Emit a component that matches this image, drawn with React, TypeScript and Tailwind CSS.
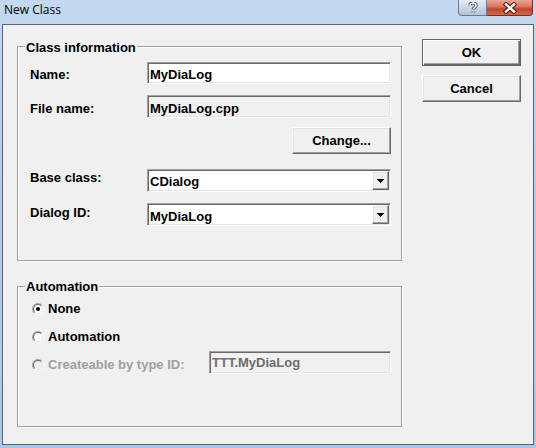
import React from 'react'

// classic 3D edges
const sunken =
  'border border-t-[#a0a0a0] border-l-[#a0a0a0] border-b-white border-r-white shadow-[inset_1px_1px_0_#696969,inset_-1px_-1px_0_#e3e3e3]'
const raised =
  'border border-t-white border-l-white border-b-[#696969] border-r-[#696969] shadow-[inset_-1px_-1px_0_#a0a0a0,inset_1px_1px_0_#e3e3e3] bg-[#f0f0f0]'

interface GroupBoxProps {
  title: string
  titleClass: string
  className: string
  children: React.ReactNode
}

const GroupBox: React.FC<GroupBoxProps> = ({ title, titleClass, className, children }) => (
  <div
    className={`relative border border-[#a0a0a0] shadow-[1px_1px_0_#fff,inset_1px_1px_0_#fff] ${className}`}
  >
    <span className={`absolute px-[1px] bg-[#f0f0f0] leading-[15px] ${titleClass}`}>{title}</span>
    {children}
  </div>
)

const DropArrow = () => (
  <svg width="7" height="4" viewBox="0 0 7 4" shapeRendering="crispEdges">
    <path d="M0 0h7v1H0zM1 1h5v1H1zM2 2h3v1H2zM3 3h1v1H3z" fill="#000" />
  </svg>
)

const Combo: React.FC<{ value: string; textPt: string }> = ({ value, textPt }) => (
  <div className={`w-[244px] h-[23px] bg-white flex items-start ${sunken}`}>
    <span className={`flex-1 pl-[2px] ${textPt}`}>{value}</span>
    <span className={`w-[17px] h-[19px] mt-[1px] mr-[1px] flex items-center justify-center ${raised}`}>
      <DropArrow />
    </span>
  </div>
)

const Radio: React.FC<{ checked?: boolean; disabled?: boolean }> = ({ checked, disabled }) => (
  <span className="w-[12px] h-[12px] shrink-0 rounded-full border border-t-[#a0a0a0] border-l-[#a0a0a0] border-b-white border-r-white flex items-center justify-center">
    <span
      className={`w-[10px] h-[10px] rounded-full border border-t-[#696969] border-l-[#696969] border-b-[#e3e3e3] border-r-[#e3e3e3] flex items-center justify-center ${
        disabled ? 'bg-[#f0f0f0]' : 'bg-white'
      }`}
    >
      {checked && <span className="w-[4px] h-[4px] rounded-full bg-black" />}
    </span>
  </span>
)

export default function App() {
  return (
    <div className="w-[536px] h-[448px] overflow-hidden flex flex-col bg-[linear-gradient(180deg,#c3d9f0_0%,#b2cdea_40%,#a9c6e6_100%)] font-['Liberation_Sans',Arial,sans-serif]">
      {/* title bar */}
      <div className="h-[24px] flex items-start shrink-0">
        <span className="pl-[4px] pt-[2px] text-[12px] leading-[16px] text-black font-['Open_Sans','Noto_Sans',sans-serif]">
          New Class
        </span>
        <div className="ml-auto mr-[3px] flex">
          <div className="w-[29px] h-[16px] rounded-bl-[4px] border border-t-0 border-[#6f7c8e] bg-[linear-gradient(180deg,#e4ebf4_0%,#ccd8e6_50%,#b3c3d6_100%)] flex items-center justify-center">
            <svg width="10" height="12" viewBox="0 0 10 12">
              <path
                d="M2 3.5C2 1.5 3.5 1 5 1s3 .8 3 2.5c0 2-2.8 2.2-2.8 4M5.2 9.5v1"
                fill="none"
                stroke="#3a4350"
                strokeWidth="3.2"
              />
              <path
                d="M2 3.5C2 1.5 3.5 1 5 1s3 .8 3 2.5c0 2-2.8 2.2-2.8 4M5.2 9.5v1"
                fill="none"
                stroke="#fff"
                strokeWidth="1.6"
              />
            </svg>
          </div>
          <div className="w-[46px] h-[16px] rounded-br-[4px] border border-t-0 border-l-0 border-[#7b2a1e] bg-[linear-gradient(180deg,#eaa696_0%,#d8725e_45%,#c5432a_60%,#d16a52_100%)] flex items-center justify-center">
            <svg width="16" height="12" viewBox="0 0 16 12">
              <path d="M4 2.5l8 7M12 2.5l-8 7" stroke="#4a1a12" strokeWidth="4.4" strokeLinecap="square" />
              <path d="M4 2.5l8 7M12 2.5l-8 7" stroke="#fff" strokeWidth="2.4" strokeLinecap="square" />
            </svg>
          </div>
        </div>
      </div>

      {/* client area */}
      <div className="ml-[2px] w-[532px] h-[421px] border border-[#5d6470] bg-[#f0f0f0] flex text-[13px] leading-[15px] font-bold text-black">
        <div className="pl-[14px] pt-[21px] flex flex-col">
          <GroupBox title="Class information" titleClass="left-[7px] top-[-7px]" className="w-[385px] h-[215px]">
            <div className="pl-[12px] pr-[10px] pt-[15px] flex flex-col">
              <div className="flex items-start">
                <span className="w-[117px] pt-[5px]">Name:</span>
                <div className={`w-[244px] h-[22px] bg-white pl-[2px] pt-[4px] ${sunken}`}>MyDiaLog</div>
              </div>
              <div className="flex items-start mt-[11px]">
                <span className="w-[117px] pt-[6px]">File name:</span>
                <div className={`w-[244px] h-[23px] pl-[2px] pt-[5px] ${sunken}`}>MyDiaLog.cpp</div>
              </div>
              <button
                className={`self-end mt-[9px] w-[99px] h-[27px] flex items-center justify-center ${raised}`}
              >
                Change...
              </button>
              <div className="flex items-start mt-[15px]">
                <span className="w-[117px] pt-[1px]">Base class:</span>
                <Combo value="CDialog" textPt="pt-[4px]" />
              </div>
              <div className="flex items-start mt-[11px]">
                <span className="w-[117px] pt-[2px]">Dialog ID:</span>
                <Combo value="MyDiaLog" textPt="pt-[5px]" />
              </div>
            </div>
          </GroupBox>

          <GroupBox title="Automation" titleClass="left-[7px] top-[-8px]" className="mt-[25px] w-[385px] h-[141px]">
            <div className="pl-[14px] pt-[14px] flex flex-col">
              <div className="flex items-center h-[15px]">
                <Radio checked />
                <span className="ml-[4px]">None</span>
              </div>
              <div className="flex items-center h-[15px] mt-[13px]">
                <Radio />
                <span className="ml-[4px]">Automation</span>
              </div>
              <div className="flex items-start mt-[7px]">
                <div className="flex items-center h-[15px] mt-[6px]">
                  <Radio disabled />
                  <span className="ml-[4px] w-[161px] text-[#a0a0a0]">Createable by type ID:</span>
                </div>
                <div className={`w-[182px] h-[23px] pl-[2px] pt-[3px] text-[#6d6d6d] ${sunken}`}>TTT.MyDiaLog</div>
              </div>
            </div>
          </GroupBox>
        </div>

        <div className="ml-[20px] pt-[14px] flex flex-col gap-[9px]">
          <button className="w-[99px] h-[27px] flex items-center justify-center bg-[#f0f0f0] border border-[#646464] shadow-[inset_1px_1px_0_#fff,inset_-1px_-1px_0_#696969,inset_-2px_-2px_0_#a0a0a0]">
            OK
          </button>
          <button className={`w-[99px] h-[27px] flex items-center justify-center ${raised}`}>Cancel</button>
        </div>
      </div>
    </div>
  )
}
